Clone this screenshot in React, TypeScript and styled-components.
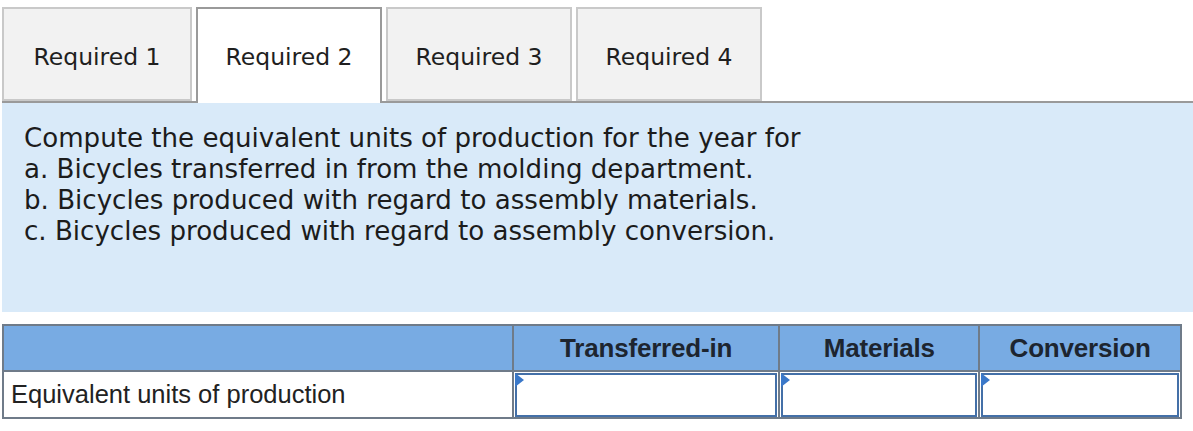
import { useState } from 'react'
import styled, { createGlobalStyle } from 'styled-components'

const TABS = ['Required 1', 'Required 2', 'Required 3', 'Required 4']
const COLUMNS = ['Transferred-in', 'Materials', 'Conversion']

const GlobalStyle = createGlobalStyle`
  body {
    margin: 0;
    background: #ffffff;
    font-family: 'DejaVu Sans', Verdana, sans-serif;
  }
`

const Page = styled.div`
  padding: 7px 0 0 2px;
`

const TabBar = styled.div`
  display: flex;
  gap: 4px;
  height: 96px;
  box-sizing: border-box;
  border-bottom: 2px solid #9a9a9a;
`

const Tab = styled.button<{ $active?: boolean; $first?: boolean }>`
  width: ${(p) => (p.$first ? '190px' : '186px')};
  height: ${(p) => (p.$active ? '96px' : '94px')};
  box-sizing: border-box;
  margin: 0;
  border: 2px solid ${(p) => (p.$active ? '#9a9a9a' : '#c9c9c9')};
  border-bottom: ${(p) => (p.$active ? 'none' : '2px solid #c9c9c9')};
  background: ${(p) => (p.$active ? '#ffffff' : '#f2f2f2')};
  font-family: 'DejaVu Sans', Verdana, sans-serif;
  font-size: 23.5px;
  color: #1f1f1f;
  padding: 5px 0 ${(p) => (p.$active ? '4px' : '0')};
  cursor: pointer;
  position: relative;
  z-index: ${(p) => (p.$active ? 1 : 0)};
`

const Prompt = styled.div`
  background: #d9eaf9;
  height: 209px;
  box-sizing: border-box;
  padding: 20px 22px;
  font-size: 26.1px;
  line-height: 31px;
  color: #1c1c1c;
`

const Grid = styled.table`
  margin-top: 12px;
  width: 1180px;
  border-collapse: collapse;
  font-family: 'Liberation Sans', Arial, sans-serif;
`

const HeadCell = styled.th`
  background: #78abe3;
  border: 2px solid #6f7b89;
  height: 46px;
  box-sizing: border-box;
  padding: 0;
  font-weight: bold;
  font-size: 26px;
  letter-spacing: -0.2px;
  color: #1d2530;
  text-align: center;
`

const LabelCell = styled.td`
  border: 2px solid #6f7b89;
  height: 47px;
  box-sizing: border-box;
  padding: 0 0 0 7px;
  font-size: 25.5px;
  color: #222222;
`

const InputCell = styled.td`
  border: 2px solid #6f7b89;
  padding: 0;
  height: 47px;
  box-sizing: border-box;
`

const InputBox = styled.div`
  position: relative;
  height: 44px;
  margin: 0 1px;
  box-sizing: border-box;
  border: 2px solid #4470a8;
  background: #ffffff;

  input {
    width: 100%;
    height: 100%;
    border: none;
    outline: none;
    box-sizing: border-box;
    padding: 0 8px;
    font-size: 22px;
    background: transparent;
  }
`

const Marker = styled.span`
  position: absolute;
  left: -2px;
  top: -2px;
  width: 0;
  height: 0;
  border-top: 7px solid transparent;
  border-bottom: 7px solid transparent;
  border-left: 9px solid #3a78c9;
`

export default function App() {
  const [active, setActive] = useState(1)
  const [values, setValues] = useState(['', '', ''])

  return (
    <Page>
      <GlobalStyle />
      <TabBar>
        {TABS.map((label, i) => (
          <Tab key={label} $first={i === 0} $active={i === active} onClick={() => setActive(i)}>
            {label}
          </Tab>
        ))}
      </TabBar>
      <Prompt>
        Compute the equivalent units of production for the year for
        <br />
        a. Bicycles transferred in from the molding department.
        <br />
        b. Bicycles produced with regard to assembly materials.
        <br />
        c. Bicycles produced with regard to assembly conversion.
      </Prompt>
      <Grid>
        <colgroup>
          <col style={{ width: 511 }} />
          <col style={{ width: 267 }} />
          <col style={{ width: 200 }} />
          <col style={{ width: 202 }} />
        </colgroup>
        <thead>
          <tr>
            <HeadCell />
            {COLUMNS.map((c) => (
              <HeadCell key={c}>{c}</HeadCell>
            ))}
          </tr>
        </thead>
        <tbody>
          <tr>
            <LabelCell>Equivalent units of production</LabelCell>
            {values.map((v, i) => (
              <InputCell key={COLUMNS[i]}>
                <InputBox>
                  <Marker />
                  <input
                    value={v}
                    onChange={(e) => setValues(values.map((old, j) => (j === i ? e.target.value : old)))}
                  />
                </InputBox>
              </InputCell>
            ))}
          </tr>
        </tbody>
      </Grid>
    </Page>
  )
}
